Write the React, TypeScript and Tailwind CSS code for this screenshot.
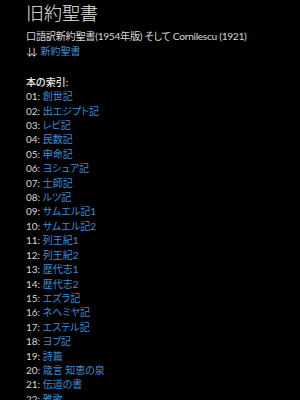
const books = [
  '創世記',
  '出エジプト記',
  'レビ記',
  '民数記',
  '申命記',
  'ヨシュア記',
  '士師記',
  'ルツ記',
  'サムエル記1',
  'サムエル記2',
  '列王紀1',
  '列王紀2',
  '歴代志1',
  '歴代志2',
  'エズラ記',
  'ネヘミヤ記',
  'エステル記',
  'ヨブ記',
  '詩篇',
  '箴言 知恵の泉',
  '伝道の書',
  '雅歌',
  'イザヤ書',
]

export default function App() {
  return (
    <div
      className="w-[300px] h-[400px] overflow-hidden bg-black text-[#d6d6d6] pl-[26px] text-[10px] leading-[14.4px] [font-feature-settings:'palt']"
      style={{ fontFamily: 'Lato, "Noto Sans CJK JP", sans-serif' }}
    >
      <h1 className="text-[18px] leading-[22px] font-light text-[#e6e6e6] pt-[2px]">旧約聖書</h1>
      <p className="mt-[5px] whitespace-nowrap text-[10.2px] tracking-[-0.3px]">
        口語訳新約聖書(1954年版) そして Cornilescu (1921)
      </p>
      <p className="mt-[1px]">
        <span className="tracking-[-3px]">↓</span>↓{' '}
        <a href="#" className="text-[#3c8fd9]">新約聖書</a>
      </p>
      <p className="mt-[16px] text-[#ececec] font-medium">本の索引:</p>
      <ul>
        {books.map((b, i) => (
          <li key={b} className="whitespace-nowrap">
            {String(i + 1).padStart(2, '0')}: <a href="#" className="text-[#3c8fd9]">{b}</a>
          </li>
        ))}
      </ul>
    </div>
  )
}
